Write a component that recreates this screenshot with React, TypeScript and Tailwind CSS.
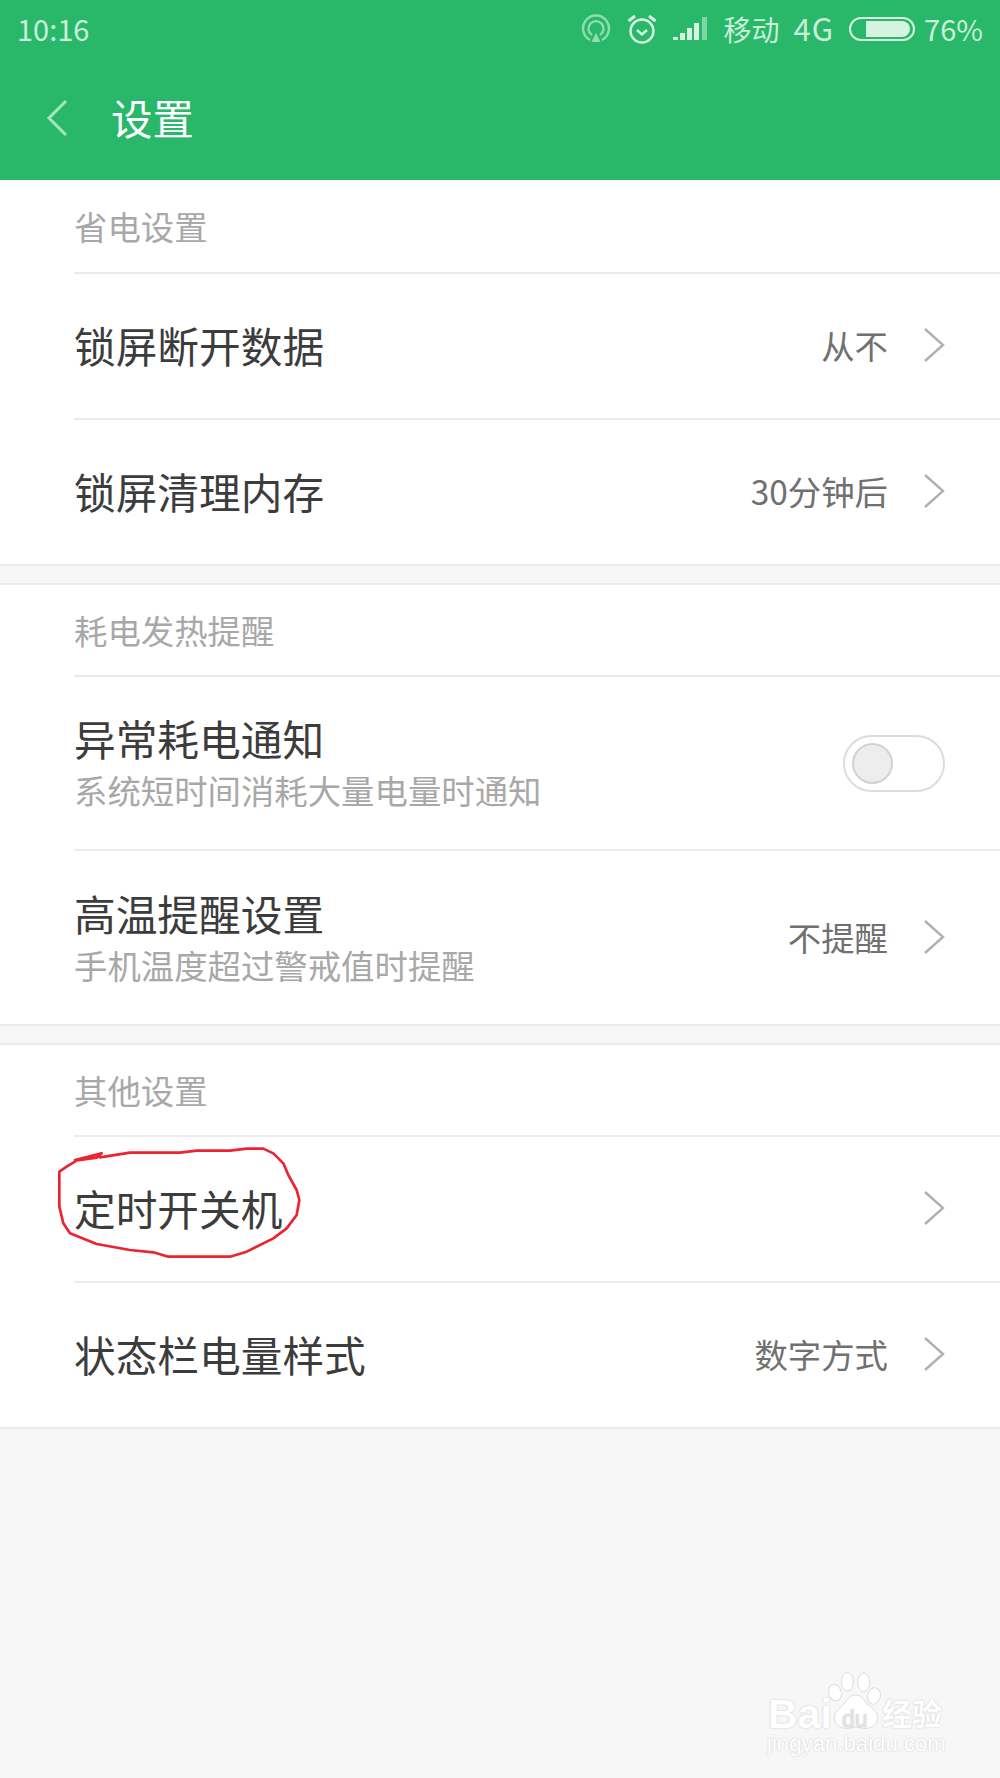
const CJK = "font-['Noto_Sans_CJK_SC','Noto_Sans',sans-serif]";

function Chevron() {
  return (
    <svg width="22" height="36" viewBox="0 0 22 36" fill="none" className="shrink-0">
      <path d="M2 2l18 16L2 34" stroke="#b0b0b0" strokeWidth="2.4" />
    </svg>
  );
}

function SectionHead({ title, height }: { title: string; height: string }) {
  return (
    <div className={`ml-[74px] flex items-center border-b-2 border-[#ebebeb] text-[33.4px] text-[#a8a8a8] leading-none ${height}`}>
      {title}
    </div>
  );
}

function Row({ title, value, sub, height, last, toggle }: { title: string; value?: string; sub?: string; height: string; last?: boolean; toggle?: boolean }) {
  return (
    <div className={`ml-[74px] pr-[55px] flex items-center justify-between ${height} ${sub ? '' : 'pb-[2px]'} ${last ? '' : 'border-b-2 border-[#ebebeb]'}`}>
      <div className={`flex flex-col ${sub ? 'pb-[2px] gap-[6px]' : ''}`}>
        <div className="text-[41.7px] leading-[50px] text-[#3c3c3c]">{title}</div>
        {sub && <div className="text-[33.4px] leading-[42px] text-[#a8a8a8]">{sub}</div>}
      </div>
      {toggle ? (
        <div className="w-[102px] h-[57px] rounded-full border-2 border-[#dcdcdc] flex items-center pl-[7px]">
          <div className="w-[41px] h-[41px] rounded-full bg-[#ededed] border-2 border-[#d2d2d2]" />
        </div>
      ) : (
        <div className="flex items-center gap-[35px]">
          {value && <span className="text-[33.4px] text-[#707070]">{value}</span>}
          <Chevron />
        </div>
      )}
    </div>
  );
}

function RedCircle() {
  return (
    <svg className="absolute left-[40px] top-[1120px]" width="290" height="160" viewBox="0 0 870 480" fill="none">
      <path
        d="M105 120 L185 100 L170 113 L105 122 M180 112 L270 98 L420 98 L470 92 L570 92 L620 86 L670 86 L700 100 L730 130 L745 165 L770 210 L778 240 L770 285 L740 325 L700 355 L660 375 L620 395 L570 410 L385 410 L340 397 L270 390 L170 372 L90 340 L70 310 L58 260 L58 155 L80 140 L105 125"
        stroke="#ec2330"
        strokeWidth="8"
        strokeLinejoin="round"
        strokeLinecap="round"
      />
    </svg>
  );
}

function Watermark() {
  const shadow = "[text-shadow:0_0_2px_#c4c4c4]";
  return (
    <div className="absolute left-[740px] top-[1650px] w-[220px] h-[128px] font-['Liberation_Sans',sans-serif]">
      <svg className="absolute left-0 top-0" width="220" height="128" viewBox="0 0 660 384" fill="#fff" stroke="#dcdcdc" strokeWidth="3">
        <ellipse cx="285" cy="128" rx="19" ry="25" transform="rotate(-15 285 128)" />
        <ellipse cx="322" cy="95" rx="18" ry="28" />
        <ellipse cx="371" cy="97" rx="18" ry="28" />
        <ellipse cx="402" cy="138" rx="19" ry="25" transform="rotate(15 402 138)" />
        <path d="M347 135c-22 0-28 22-42 34s-22 22-22 36 16 30 36 30c12 0 18-4 28-4s18 4 30 4c20 0 36-14 36-30s-10-26-24-36-20-34-42-34z" />
      </svg>
      <span className={`absolute left-[28px] top-[47px] text-[41px] leading-[35px] font-bold text-white ${shadow}`}>Bai</span>
      <span className={`absolute left-[102px] top-[57px] text-[23px] leading-[24px] text-[#e2e2e2] ${shadow}`}>du</span>
      <span className={`absolute left-[142px] top-[44px] text-[30px] leading-[36px] font-bold text-white ${CJK} ${shadow}`}>经验</span>
      <span className={`absolute left-[27px] top-[82px] text-[22.200px] leading-[24px] text-white whitespace-nowrap ${shadow}`}>jingyan.baidu.com</span>
    </div>
  );
}

export default function App() {
  return (
    <div className={`relative w-[1000px] h-[1778px] bg-[#f7f7f7] overflow-hidden ${CJK}`}>
      <div className="bg-[#29b869] h-[180px]">
        <div className="h-[60px] flex items-center justify-between pl-[17px] pr-[17px] text-[#c9eed9] text-[29px] pb-[3px]">
          <span>10:16</span>
          <div className="flex items-center">
            <svg width="30" height="30" viewBox="0 0 30 30" fill="none" stroke="#8fdcb0" strokeWidth="2.4" className="mr-[15px]">
              <path d="M9 26A13 13 0 1 1 21 26" />
              <path d="M11 21A7.5 7.5 0 1 1 19 21" />
              <path d="M15 19l4.500 9h-9z" fill="#8fdcb0" stroke="none" />
            </svg>
            <svg width="32" height="32" viewBox="0 0 32 32" fill="none" stroke="#d6f3e2" strokeWidth="2.400" className="mr-[15px]">
              <circle cx="16" cy="18" r="11.500" />
              <path d="M11 17l5 4.500 5-4.500" />
              <path d="M2.500 8L9 3M29.500 8L23 3" strokeWidth="3" />
            </svg>
            <svg width="35" height="24" viewBox="0 0 35 24" className="mr-[16px]">
              <rect x="0" y="20" width="5" height="3" fill="#d6f3e2" />
              <rect x="7" y="16" width="5" height="7" fill="#d6f3e2" />
              <rect x="14" y="11" width="5" height="12" fill="#d6f3e2" />
              <rect x="21" y="6" width="5" height="17" fill="#d6f3e2" />
              <rect x="29" y="0" width="5" height="23" fill="#7fd6a5" />
            </svg>
            <span className="text-[28px] mr-[14px]">移动</span>
            <span className="text-[31px] leading-none tracking-[1px] mr-[15px] mb-[2px]">4G</span>
            <div className="w-[66px] h-[24px] rounded-full border-2 border-[#d6f3e2] flex items-center justify-end pr-[3px] mr-[9px]">
              <div className="w-[44px] h-[16px] bg-[#d6f3e2] rounded-r-full" />
            </div>
            <span>76%</span>
          </div>
        </div>
        <div className="h-[120px] flex items-center pl-[46px] pb-[4px]">
          <svg width="22" height="38" viewBox="0 0 22 38" fill="none" className="mr-[43px]">
            <path d="M20 2L3 19l17 17" stroke="#a6e3c0" strokeWidth="3" />
          </svg>
          <span className="text-[41.5px] text-white leading-none">设置</span>
        </div>
      </div>

      <div className="bg-white border-b-2 border-[#ebebeb]">
        <SectionHead title="省电设置" height="h-[94px]" />
        <Row title="锁屏断开数据" value="从不" height="h-[146px]" />
        <Row title="锁屏清理内存" value="30分钟后" height="h-[144px]" last />
      </div>

      <div className="mt-[17px] bg-white border-y-2 border-[#ebebeb]">
        <SectionHead title="耗电发热提醒" height="h-[92px]" />
        <Row title="异常耗电通知" sub="系统短时间消耗大量电量时通知" height="h-[174px]" toggle />
        <Row title="高温提醒设置" sub="手机温度超过警戒值时提醒" value="不提醒" height="h-[173px]" last />
      </div>

      <div className="mt-[17px] bg-white border-y-2 border-[#ebebeb]">
        <SectionHead title="其他设置" height="h-[92px]" />
        <Row title="定时开关机" height="h-[146px]" />
        <Row title="状态栏电量样式" value="数字方式" height="h-[144px]" last />
      </div>

      <RedCircle />
      <Watermark />
    </div>
  );
}
